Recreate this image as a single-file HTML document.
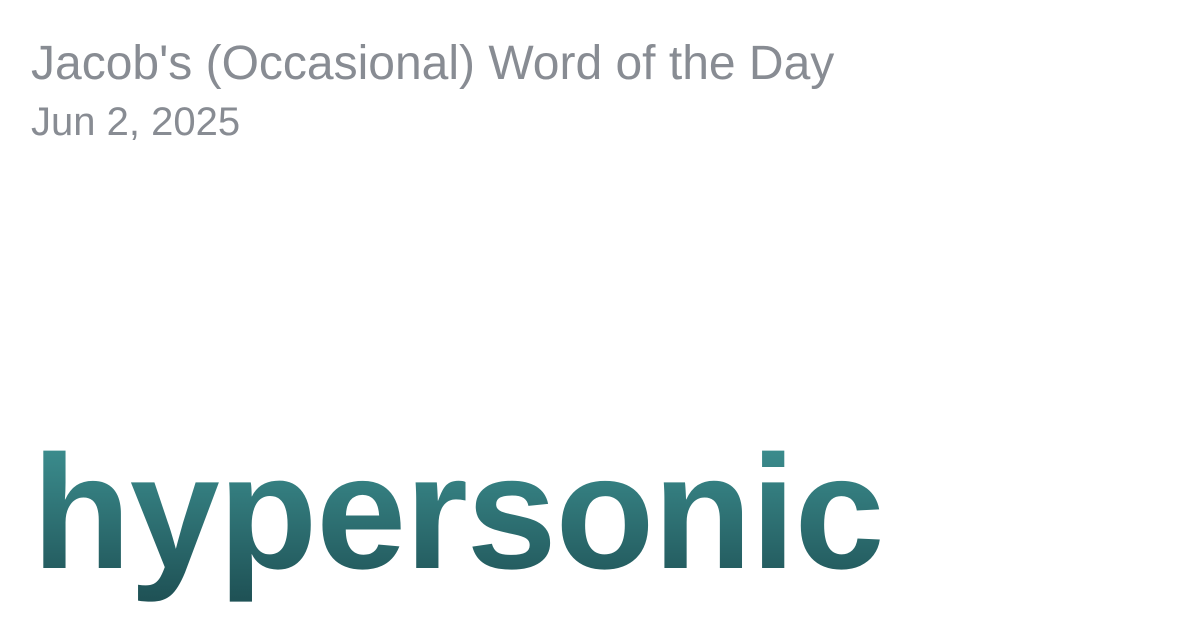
<!DOCTYPE html>
<html><head><meta charset="utf-8"><style>
html,body{margin:0;padding:0;background:#fff;width:1200px;height:630px;overflow:hidden;font-family:"Liberation Sans",Arial,sans-serif}
.t{position:absolute;left:31px;color:#888c93;white-space:nowrap}
#a{top:36px;font-size:48px;line-height:56px}
#b{top:100px;font-size:40px;line-height:44px}
#w{position:absolute;left:32px;top:418px;font-size:162px;line-height:190px;font-weight:bold;letter-spacing:-1.3px;white-space:nowrap;
background:linear-gradient(180deg,#3b8c8d 0%,#3b8c8d 16%,#1f5256 95%);-webkit-background-clip:text;background-clip:text;color:transparent}
</style></head><body>
<div class="t" id="a">Jacob's (Occasional) Word of the Day</div>
<div class="t" id="b">Jun 2, 2025</div>
<div id="w">hypersonic</div>
</body></html>
